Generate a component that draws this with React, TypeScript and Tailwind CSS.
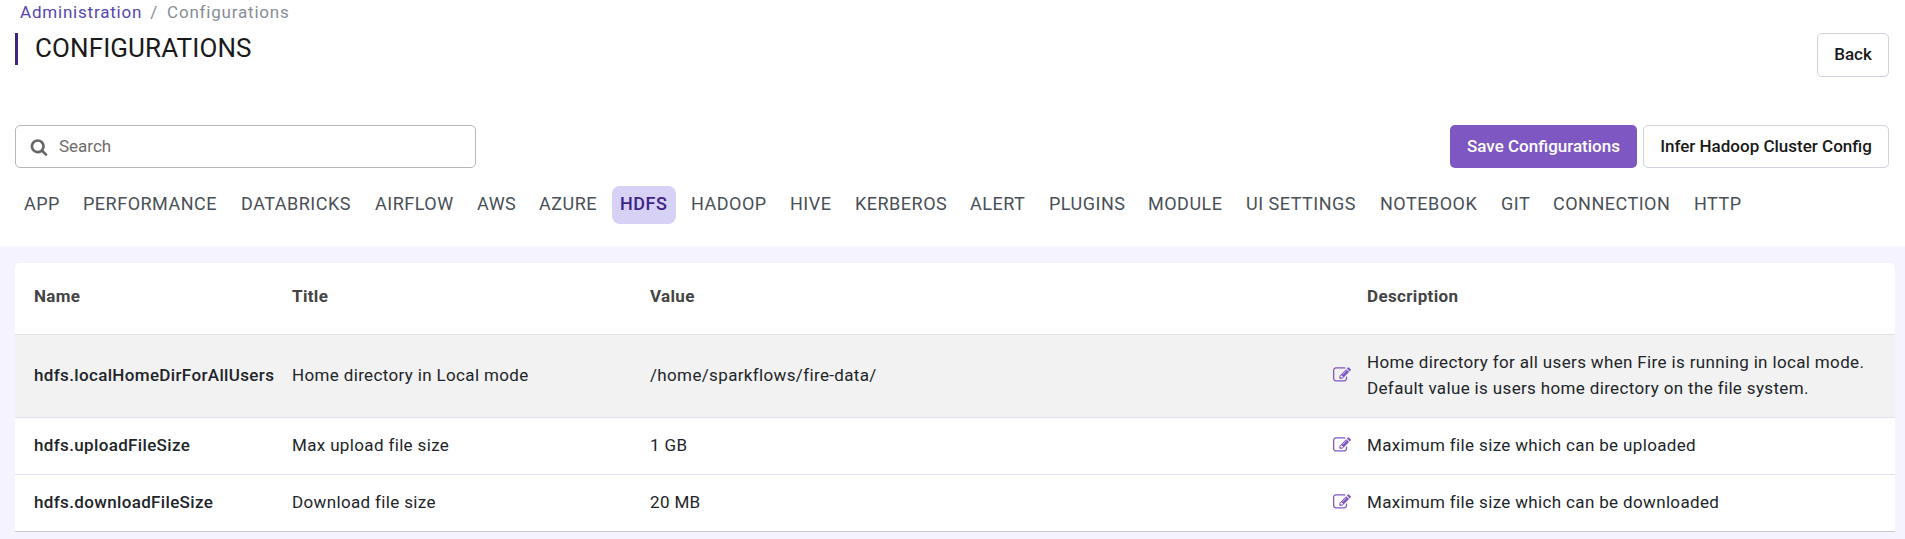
const tabs: { name: string; width: string }[] = [
  { name: 'APP', width: 'w-[59px]' },
  { name: 'PERFORMANCE', width: 'w-[158px]' },
  { name: 'DATABRICKS', width: 'w-[134px]' },
  { name: 'AIRFLOW', width: 'w-[102px]' },
  { name: 'AWS', width: 'w-[62px]' },
  { name: 'AZURE', width: 'w-[81px]' },
  { name: 'HDFS', width: 'w-[71px]' },
  { name: 'HADOOP', width: 'w-[99px]' },
  { name: 'HIVE', width: 'w-[65px]' },
  { name: 'KERBEROS', width: 'w-[115px]' },
  { name: 'ALERT', width: 'w-[79px]' },
  { name: 'PLUGINS', width: 'w-[99px]' },
  { name: 'MODULE', width: 'w-[98px]' },
  { name: 'UI SETTINGS', width: 'w-[134px]' },
  { name: 'NOTEBOOK', width: 'w-[121px]' },
  { name: 'GIT', width: 'w-[52px]' },
  { name: 'CONNECTION', width: 'w-[141px]' },
  { name: 'HTTP', width: 'w-[70px]' },
];

const rows = [
  {
    name: 'hdfs.localHomeDirForAllUsers',
    title: 'Home directory in Local mode',
    value: '/home/sparkflows/fire-data/',
    description: ['Home directory for all users when Fire is running in local mode.', 'Default value is users home directory on the file system.'],
    style: 'h-[83px] bg-[#f2f2f2] border-[#e2e0f5]',
  },
  {
    name: 'hdfs.uploadFileSize',
    title: 'Max upload file size',
    value: '1 GB',
    description: ['Maximum file size which can be uploaded'],
    style: 'h-[57px] border-[#e2e0f5]',
  },
  {
    name: 'hdfs.downloadFileSize',
    title: 'Download file size',
    value: '20 MB',
    description: ['Maximum file size which can be downloaded'],
    style: 'h-[57px] border-[#c8c8cc]',
  },
];

const columns = 'grid grid-cols-[258px_358px_683px_34px_1fr] items-center border-b pl-[19px]';

function SearchIcon() {
  return (
    <svg viewBox="0 0 1792 1792" className="ml-3.5 size-[18px] fill-[#666666]">
      <path d="M1216 832q0-185-131.5-316.5t-316.5-131.5-316.5 131.5-131.5 316.5 131.5 316.5 316.5 131.5 316.5-131.5 131.5-316.5zm512 832q0 52-38 90t-90 38q-54 0-90-38l-343-342q-179 124-399 124-143 0-273.5-55.5t-225-150-150-225-55.5-273.5 55.5-273.5 150-225 225-150 273.5-55.5 273.5 55.5 225 150 150 225 55.5 273.5q0 220-124 399l343 343q37 37 37 90z" />
    </svg>
  );
}

function EditIcon() {
  return (
    <svg viewBox="0 0 1792 1792" className="mb-0.5 size-[18px] fill-[#7e57c2]">
      <path d="M888 1184l116-116-152-152-116 116v56h96v96h56zm440-720q-16-16-33 1l-350 350q-17 17-1 33t33-1l350-350q17-17 1-33zm80 594v190q0 119-84.5 203.5t-203.5 84.5h-832q-119 0-203.5-84.5t-84.5-203.5v-832q0-119 84.5-203.5t203.5-84.5h832q63 0 117 25 15 7 18 23 3 17-9 29l-49 49q-14 14-32 8-23-6-45-6h-832q-66 0-113 47t-47 113v832q0 66 47 113t113 47h832q66 0 113-47t47-113v-126q0-13 9-22l64-64q15-15 35-7t20 29zm-96-738l288 288-672 672h-288v-288zm444 132l-92 92-288-288 92-92q28-28 68-28t68 28l152 152q28 28 28 68t-28 68z" />
    </svg>
  );
}

export default function App() {
  return (
    <div className="flex h-[539px] w-full flex-col overflow-hidden bg-[#f5f3ff] font-['Roboto',sans-serif] text-[17px] text-[#212529]">
      <header className="h-[246px] shrink-0 bg-white">
        <nav className="flex h-[26px] items-center pl-5 tracking-[0.8px]">
          <a className="text-[#5546b4]">Administration</a>
          <span className="mr-[9px] ml-2 text-[#868e96]">/</span>
          <span className="text-[#868e96]">Configurations</span>
        </nav>
        <div className="mt-[7px] flex h-[92px] items-start justify-between pr-4 pl-[15px]">
          <h1 className="flex h-8 items-center border-l-[3px] border-[#3e2485] pb-0.5 pl-[17px] text-[26px] leading-8 tracking-[0.1px] text-[#1a1a1a]">CONFIGURATIONS</h1>
          <button className="h-11 w-[72px] rounded-[5px] border border-[#d0d2dc] font-medium text-[#1a1a1a]">Back</button>
        </div>
        <div className="flex h-[43px] items-center pr-4 pl-[15px]">
          <div className="mr-auto flex h-full w-[461px] items-center gap-[11px] rounded-[5px] border border-[#b8b8bc]">
            <SearchIcon />
            <span className="text-[#6c6c6c]">Search</span>
          </div>
          <button className="mr-1.5 h-full w-[187px] rounded-[5px] bg-[#7e57c2] font-medium text-white">Save Configurations</button>
          <button className="h-full w-[246px] rounded-[5px] border border-[#d0d2dc] font-medium text-[#1a1a1a]">Infer Hadoop Cluster Config</button>
        </div>
        <div className="mt-[18px] flex pl-4 text-lg tracking-[0.5px] text-[#495057]">
          {tabs.map((tab) => (
            <div key={tab.name} className={tab.width}>
              <span className={tab.name === 'HDFS' ? 'flex h-[38px] w-16 items-center rounded-lg bg-[#d6d1f5] pb-[3px] pl-2 font-medium whitespace-nowrap text-[#3e2485]' : 'flex h-[38px] items-center pb-[3px] pl-2 whitespace-nowrap'}>
                {tab.name}
              </span>
            </div>
          ))}
        </div>
      </header>
      <main className="pt-[17px] pr-2.5 pl-[15px]">
        <section className="overflow-hidden rounded-t-[5px] bg-white tracking-[0.35px]">
          <div className={`${columns} h-[72px] border-[#dee2e6] pb-1 font-bold text-[#444444]`}>
            <span>Name</span>
            <span>Title</span>
            <span>Value</span>
            <span />
            <span>Description</span>
          </div>
          {rows.map((row) => (
            <div key={row.name} className={`${columns} ${row.style}`}>
              <span className="font-medium">{row.name}</span>
              <span>{row.title}</span>
              <span>{row.value}</span>
              <EditIcon />
              <span className="pb-0.5 leading-[26px]">
                {row.description.map((line) => (
                  <span key={line} className="block">{line}</span>
                ))}
              </span>
            </div>
          ))}
        </section>
      </main>
    </div>
  );
}
